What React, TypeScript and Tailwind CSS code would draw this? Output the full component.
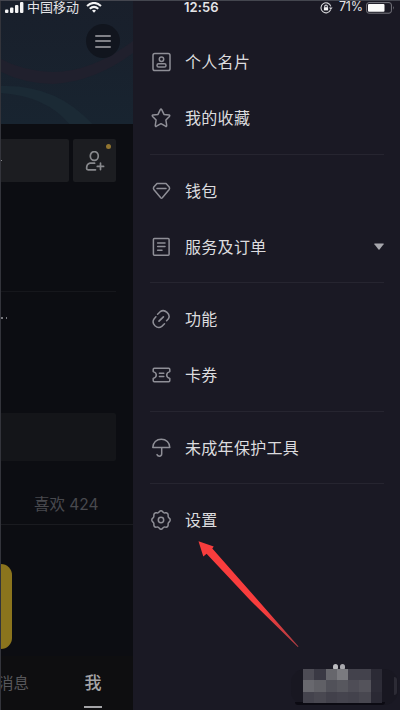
import type { ReactNode } from "react";

/* ---------- Icons ---------- */

function Icon({ children }: { children: ReactNode }) {
  return (
    <svg
      className="h-5 w-5 shrink-0"
      viewBox="0 0 20 20"
      fill="none"
      stroke="#8f8f97"
      strokeWidth="1.5"
      strokeLinecap="round"
      strokeLinejoin="round"
    >
      {children}
    </svg>
  );
}

const cardIcon = (
  <Icon>
    <rect x="2" y="1.6" width="17" height="17" rx="1.8" />
    <circle cx="10.5" cy="7.2" r="2.2" />
    <rect x="6" y="11.8" width="9" height="3.2" rx="1.6" />
  </Icon>
);

const starIcon = (
  <Icon>
    <path d="M9.3 1.6Q10 .6 10.7 1.6L13 6.4L18 7.1Q19.3 7.4 18.4 8.4L14.9 12L15.7 17.4Q15.8 18.8 14.5 18.2L10 15.7L5.5 18.2Q4.2 18.8 4.3 17.4L5.1 12L1.6 8.4Q.7 7.4 2 7.1L7 6.4Z" />
  </Icon>
);

const walletIcon = (
  <Icon>
    <path d="M6 2.6H15L18.2 6Q19 7.3 18.2 8.5L11.3 16.8Q10.5 17.6 9.7 16.8L2.8 8.5Q2 7.3 2.8 6Z" />
    <path d="M6 7.4H15" />
  </Icon>
);

const orderIcon = (
  <Icon>
    <rect x="2.4" y="1.6" width="15.7" height="16.6" rx="1" />
    <path d="M6.6 6H14M6.6 9.6H14M6.6 13.2H11" />
  </Icon>
);

const linkIcon = (
  <Icon>
    <path d="M6.6 5.2L9.2 2.7Q12.6 .2 16 3.4Q19.6 6.8 17.2 10L15.6 11.8" />
    <path d="M4.9 7.8L3.2 9.8Q.6 13.4 4 16.7Q7.4 19.8 10.8 17.4L13.5 14.8" />
    <path d="M8 12.2L12.4 7.8" strokeWidth="1.7" />
  </Icon>
);

const ticketIcon = (
  <Icon>
    <path d="M3.3 3.3H17.7Q18.8 3.3 18.8 4.5V6.6Q15.7 7.5 15.7 10Q15.7 12.5 18.8 13.4V15.5Q18.8 16.7 17.7 16.7H3.3Q2.2 16.7 2.2 15.5V13.4Q5.3 12.5 5.3 10Q5.3 7.5 2.2 6.6V4.5Q2.2 3.3 3.3 3.3Z" />
    <path d="M8.4 8.2H12.8M8.4 11.6H12.8" />
  </Icon>
);

const umbrellaIcon = (
  <Icon>
    <path d="M1.8 9.6C1.8 4.5 5.6 1.2 10.3 1.2S18.8 4.5 18.8 9.6Z" />
    <path d="M10.7 9.8V15.8Q10.7 18.2 8.4 18.2Q6.7 18.2 6 16.6" />
  </Icon>
);

const gearIcon = (
  <Icon>
    <path d="M10 .8C11.7 .8 11.5 2.4 13 2.9C14.5 3.3 15.2 2 16.5 3.4C17.8 4.7 16.7 5.6 17.3 7C17.9 8.4 19.2 8.2 19.2 10C19.2 11.8 17.9 11.6 17.3 13C16.7 14.4 17.8 15.3 16.5 16.6C15.2 17.9 14.5 16.7 13 17.1C11.5 17.6 11.7 19.2 10 19.2C8.3 19.2 8.5 17.6 7 17.1C5.5 16.7 4.8 17.9 3.5 16.6C2.2 15.3 3.3 14.4 2.7 13C2.1 11.6 .8 11.8 .8 10C.8 8.2 2.1 8.4 2.7 7C3.3 5.6 2.2 4.7 3.5 3.4C4.8 2 5.5 3.3 7 2.9C8.5 2.4 8.3 .8 10 .8Z" />
    <circle cx="10" cy="10" r="2.7" />
  </Icon>
);

/* ---------- Data ---------- */

interface MenuItem {
  label: string;
  icon: ReactNode;
  expandable?: boolean;
}

const groups: MenuItem[][] = [
  [
    { label: "个人名片", icon: cardIcon },
    { label: "我的收藏", icon: starIcon },
  ],
  [
    { label: "钱包", icon: walletIcon },
    { label: "服务及订单", icon: orderIcon, expandable: true },
  ],
  [
    { label: "功能", icon: linkIcon },
    { label: "卡券", icon: ticketIcon },
  ],
  [{ label: "未成年保护工具", icon: umbrellaIcon }],
  [{ label: "设置", icon: gearIcon }],
];

const mosaic = [
  "bg-[#4d4c55]", "bg-[#3a3944]", "bg-[#66666c]", "bg-[#7a7a7f]", "bg-[#43424c]", "bg-[#43424c]", "bg-[#2b2a35]",
  "bg-[#68686e]", "bg-[#606066]", "bg-[#515159]", "bg-[#57575e]", "bg-[#4e4d56]", "bg-[#54535b]", "bg-[#2d2c37]",
  "bg-[#44434d]", "bg-[#494851]", "bg-[#42414b]", "bg-[#45444e]", "bg-[#43424c]", "bg-[#484750]", "bg-[#2a2934]",
];

/* ---------- Sections ---------- */

function StatusBar() {
  return (
    <div className="absolute inset-x-0 top-0 flex h-[14px] items-center border-t border-[#44464f] text-[13px] leading-none text-[#e4e4e7]">
      <svg className="ml-[5px] h-3 w-[19px]" viewBox="0 0 19 12" fill="#f4f4f5">
        <rect x="0" y="7.5" width="3.4" height="3.5" rx="1" />
        <rect x="5" y="5.5" width="3.4" height="5.5" rx="1" />
        <rect x="10" y="3" width="3.4" height="8" rx="1" />
        <rect x="15" y="0" width="3.4" height="11" rx="1" />
      </svg>
      <span className="ml-[3px] w-[55px] whitespace-nowrap">中国移动</span>
      <svg className="ml-1 h-3 w-4" viewBox="0 0 16 12" fill="none" stroke="#f4f4f5" strokeWidth="2">
        <path d="M1 4Q8-2.2 15 4" />
        <path d="M3.7 6.8Q8 3 12.3 6.8" />
        <path d="M6 8.5Q8 7 10 8.5L8 10.8Z" fill="#f4f4f5" stroke="none" />
      </svg>
      <span className="ml-[82px] w-[37px] font-[Inter] text-[13px] font-semibold tracking-[0.1px]">12:56</span>
      <svg className="ml-[99px] h-3 w-[13px]" viewBox="0 0 13 12" fill="none" stroke="#d4d4d8" strokeWidth="1.1">
        <path d="M10.6 7.8A5 5 0 1 1 10.8 4.4" />
        <path d="M9 5.5H12.6L10.8 8Z" fill="#d4d4d8" stroke="none" />
        <rect x="3.9" y="5.2" width="4.2" height="3.2" fill="#f4f4f5" stroke="none" />
        <path d="M4.7 5.4V4.4A1.3 1.3 0 0 1 7.3 4.4V5.4" />
      </svg>
      <span className="ml-[6px] w-[26px] font-[Inter] text-[12.5px] tracking-[-0.2px]">71%</span>
      <svg className="ml-px h-3 w-[29px]" viewBox="0 0 29 12">
        <rect x=".6" y=".6" width="24.8" height="10.6" rx="2.4" fill="none" stroke="#77777f" strokeWidth="1" />
        <rect x="2" y="2" width="16.5" height="7.8" rx="1" fill="#fafafa" />
        <path d="M27 4Q28.6 5.8 27 7.8Z" fill="#77777f" />
      </svg>
    </div>
  );
}

function ProfilePage() {
  return (
    <div className="flex w-[133px] shrink-0 flex-col overflow-hidden border-l border-[#33343b] bg-[#0c0d12]">
      <div className="relative h-[124px] shrink-0 bg-[#18212c]">
        <svg className="absolute inset-0 h-full w-full" viewBox="0 0 133 124" preserveAspectRatio="none">
          <defs>
            <linearGradient id="cover" x1="0" y1="0" x2="0" y2="1">
              <stop offset="0" stopColor="#191f2b" />
              <stop offset="1" stopColor="#182430" />
            </linearGradient>
          </defs>
          <rect width="133" height="124" fill="url(#cover)" />
          <path d="M0 59Q22 71 52 72Q91 72 133 41V53Q94 82 52 84Q22 83 0 72Z" fill="#20202d" />
          <path d="M0 86Q55 84 92 124H69Q45 96 0 93Z" fill="#1b2a35" />
        </svg>
        <div className="relative ml-[85px] flex h-[58px] items-end">
          <div className="flex h-[34px] w-[34px] flex-col items-center justify-center gap-[3.5px] rounded-full bg-[#11151e]">
            <span className="h-[2px] w-4 rounded-full bg-[#808187]" />
            <span className="h-[2px] w-4 rounded-full bg-[#808187]" />
            <span className="h-[2px] w-4 rounded-full bg-[#808187]" />
          </div>
        </div>
      </div>

      <div className="mt-[15px] flex h-[43px] shrink-0 gap-1">
        <div className="flex w-[68px] items-center rounded-r-[2px] bg-[#1c1d21]">
          <span className="h-px w-px bg-[#85868a]" />
        </div>
        <div className="relative flex w-[43px] items-center justify-center rounded-[2px] bg-[#1c1d21]">
          <svg className="h-5 w-5" viewBox="0 0 20 20" fill="none" stroke="#88898d" strokeWidth="1.7" strokeLinecap="round">
            <ellipse cx="9.3" cy="5" rx="4" ry="4.4" />
            <path d="M9.6 12.2H5Q1.6 12.8 1.6 17.5Q1.6 18.8 3.1 18.8H10.5M12.3 15.4H18.6M15.5 12.2V18.6" />
          </svg>
          <span className="absolute right-[5px] top-[5px] h-[5px] w-[5px] rounded-full bg-[#927530]" />
        </div>
      </div>

      <div className="mt-[109px] mr-[17px] h-px shrink-0 bg-[#16171c]" />
      <div className="mt-[25px] flex h-[2px] shrink-0 gap-[3px]">
        <span className="h-[1.5px] w-[1.5px] bg-[#77787d]" />
        <span className="h-[1.5px] w-[1.5px] bg-[#77787d]" />
      </div>

      <div className="mt-[94px] mr-[17px] h-12 shrink-0 rounded-r-[2px] bg-[#141519]" />
      <div className="mt-8 flex h-6 shrink-0 items-center pl-[33px] text-[15.5px] text-[#48494e]">
        <span className="whitespace-nowrap">
          喜欢 <span className="font-[Inter]">424</span>
        </span>
      </div>
      <div className="mt-[7px] h-px shrink-0 bg-[#1a1b20]" />
      <div className="mt-[39px] h-[85px] w-[11px] shrink-0 rounded-r-xl bg-[#8b741d]" />

      <div className="mt-[7px] flex flex-1 items-start bg-[#0e0e10] pt-4">
        <span className="-ml-[3px] whitespace-nowrap text-[15.5px] leading-6 text-[#57575b]">消息</span>
        <div className="ml-[55px] flex flex-col items-center">
          <span className="text-[17px] font-medium leading-6 text-[#a4a4a7]">我</span>
          <span className="mt-[10px] h-[2px] w-[18px] bg-[#a4a4a7]" />
        </div>
      </div>
    </div>
  );
}

function Drawer() {
  return (
    <div className="flex-1 bg-[#1a1924] pt-[34px]">
      {groups.map((items, i) => (
        <div key={i}>
          {i > 0 && (
            <div className="flex h-[16.5px] items-center pl-[17px] pr-4">
              <div className="h-px w-full bg-[#262530]" />
            </div>
          )}
          {items.map((item) => (
            <div key={item.label} className="flex h-14 items-center pl-[18px] pr-4">
              {item.icon}
              <span className="ml-[14px] pt-[2px] text-base tracking-[0.3px] text-[#dcdcdf]">{item.label}</span>
              {item.expandable && (
                <svg className="ml-auto h-[7px] w-[10px]" viewBox="0 0 10 7" fill="#a7a7ad">
                  <path d="M.6 .5H9.4Q10 .7 9.6 1.3L5.5 6.4Q5 6.9 4.5 6.4L.4 1.3Q0 .7 .6 .5Z" />
                </svg>
              )}
            </div>
          ))}
        </div>
      ))}
    </div>
  );
}

/* ========== Component ========== */

export default function App() {
  return (
    <div className="relative flex h-[710px] w-[400px] overflow-hidden font-['Liberation_Sans','Noto_Sans_CJK_SC',sans-serif]">
      <ProfilePage />
      <Drawer />
      <StatusBar />

      {/* Arrow to the settings row */}
      <svg className="absolute left-[195px] top-[538px] h-[112px] w-[106px]" viewBox="0 0 106 112">
        <defs>
          <linearGradient id="arrow" x1="0" y1="0" x2="1" y2="1">
            <stop offset=".65" stopColor="#f83d3d" />
            <stop offset="1" stopColor="#a83c42" />
          </linearGradient>
        </defs>
        <path d="M3.5 3.3L18.7 8.4L17.3 10.6L60.5 59.5L103.5 108.5L102.8 109L55 62L11.6 15.8L8.3 18.4Z" fill="url(#arrow)" />
      </svg>

      {/* Censored corner label */}
      <div className="absolute left-[291px] top-[669px] h-9 w-[107px] rounded-[14px] bg-[#181721]" />
      <div className="absolute left-[394px] top-[677px] h-[18px] w-[3px] rounded-r-full bg-[#2c2b35]" />
      <div className="absolute left-[295px] top-[702px] h-[3px] w-[90px] rounded-b-full bg-[#0b0a12]" />
      <div className="absolute left-[333px] top-[664px] flex gap-[2px]">
        <span className="h-[6px] w-[5px] rounded-full bg-[#bcbcc0]" />
        <span className="h-[6px] w-[5px] rounded-full bg-[#a9a9ae]" />
      </div>
      <div className="absolute left-[303px] top-[669px] grid h-[34px] w-[79px] grid-cols-7 grid-rows-3">
        {mosaic.map((color, i) => (
          <span key={i} className={color} />
        ))}
      </div>
    </div>
  );
}
